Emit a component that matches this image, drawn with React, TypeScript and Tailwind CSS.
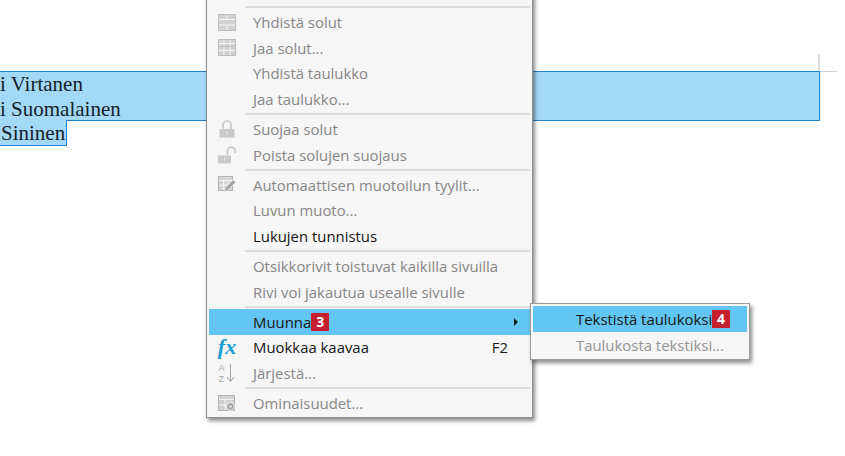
import type { ReactNode } from "react";

const ui = "font-['Open_Sans','Noto_Sans',sans-serif]";

function TableMerge() {
  return (
    <svg width="18" height="17" viewBox="0 0 18 17">
      <rect x="0.5" y="0.5" width="17" height="16" fill="#d2d2d2" stroke="#bdbdbd" />
      <path d="M1 5.5h16M1 11h16M9 1v4M9 11v5" stroke="#f5f5f5" strokeWidth="1" />
    </svg>
  );
}

function TableSplit() {
  return (
    <svg width="18" height="17" viewBox="0 0 18 17">
      <rect x="0.5" y="0.5" width="17" height="16" fill="#d2d2d2" stroke="#bdbdbd" />
      <path d="M1 4.5h16M1 11.5h16" stroke="#f5f5f5" />
      <path d="M6 1v15M12 1v15" stroke="#f5f5f5" />
      <path d="M3 7.5h12" stroke="#bdbdbd" />
    </svg>
  );
}

function LockClosed() {
  return (
    <svg width="16" height="18" viewBox="0 0 16 18" fill="none">
      <path d="M4 9V5a4 4 0 0 1 8 0v4" stroke="#c6c6c6" strokeWidth="1.6" />
      <rect x="0.5" y="9" width="15" height="8.5" fill="#c9c9c9" />
      <path d="M8 11v4" stroke="#e4e4e4" />
    </svg>
  );
}

function LockOpen() {
  return (
    <svg width="18" height="18" viewBox="0 0 18 18" fill="none">
      <path d="M9.5 9V5a3.8 3.8 0 0 1 7.6 0v2" stroke="#c6c6c6" strokeWidth="1.6" />
      <rect x="0" y="9.5" width="13" height="8" fill="#c9c9c9" />
      <path d="M6.5 11v4" stroke="#e4e4e4" />
    </svg>
  );
}

function AutoFormat() {
  return (
    <svg width="18" height="18" viewBox="0 0 18 18" fill="none">
      <rect x="0.5" y="0.5" width="14" height="14" fill="#d4d4d4" stroke="#b5b5b5" />
      <path d="M1 4.5h13M1 9h13M5.5 4v10M10 4v10" stroke="#f5f5f5" />
      <path d="M6 16l1.5-4.5 7.5-7.5 3 2-7.5 7.5z" fill="#a4a4a4" stroke="#f5f5f5" strokeWidth="0.6" />
    </svg>
  );
}

function SortAZ() {
  return (
    <svg width="18" height="22" viewBox="0 0 18 22" fill="none">
      <text x="0.5" y="9" fontSize="9" fill="#a6a6a6" fontFamily="Liberation Sans, sans-serif">A</text>
      <text x="0.5" y="19.5" fontSize="9" fill="#a6a6a6" fontFamily="Liberation Sans, sans-serif">Z</text>
      <path d="M12.5 2v17M8.8 15l3.7 4.5 3.7-4.5" stroke="#a9a9a9" strokeWidth="1.1" />
    </svg>
  );
}

function Props() {
  return (
    <svg width="18" height="17" viewBox="0 0 18 17" fill="none">
      <rect x="0.5" y="0.5" width="16" height="15" fill="#d0d0d0" stroke="#b5b5b5" />
      <path d="M1 4.5h15M1 10h8M7 5v10" stroke="#f5f5f5" />
      <circle cx="12.5" cy="11.5" r="4" fill="#a6a6a6" stroke="#f5f5f5" />
      <circle cx="12.5" cy="11.5" r="1.2" fill="#e6e6e6" />
    </svg>
  );
}

function Badge({ n }: { n: string }) {
  return (
    <span className="inline-flex h-[18px] w-[18px] items-center justify-center bg-[#c61f30] text-[14px] font-bold leading-none text-white">
      {n}
    </span>
  );
}

function Sep() {
  return <div className="my-[1.2px] ml-[36px] mr-[2px] h-[2px] bg-[#dcdcdc]" />;
}

function Row({
  icon,
  children,
  on,
  active,
  right,
}: {
  icon?: ReactNode;
  children: ReactNode;
  on?: boolean;
  active?: boolean;
  right?: ReactNode;
}) {
  return (
    <div
      className={`flex h-[25.65px] items-center ${active ? "bg-[#63c5f2]" : ""} ${
        on || active ? "text-[#161616]" : "text-[#878787]"
      }`}
    >
      <div className="mr-[8px] flex w-[36px] shrink-0 items-center justify-center">{icon}</div>
      <div className="flex flex-1 items-center whitespace-nowrap">{children}</div>
      {right}
    </div>
  );
}

export default function App() {
  return (
    <div className="relative h-[456px] w-[845px] overflow-hidden bg-white">
      {/* selected text in the document */}
      <div className="pt-[71px] font-['Liberation_Serif',serif] text-[21px] leading-[25px] text-[#141f2c]">
        <div className="h-[50px] w-[820px] border border-l-0 border-[#1f82cc] bg-[#a3d9f6]">
          <div className="whitespace-nowrap">i Virtanen</div>
          <div className="whitespace-nowrap">i Suomalainen</div>
        </div>
        <div className="-mt-[1px] h-[26px] w-[67px] border border-t-0 border-l-0 border-[#1f82cc] bg-[#a3d9f6] whitespace-nowrap pl-[1px] pt-[1px]">
          Sininen
        </div>
      </div>

      {/* page corner mark */}
      <div className="absolute left-[818px] top-[54px] h-[17px] w-[2px] bg-[#dcdcdc]" />
      <div className="absolute left-[820px] top-[71px] h-[1px] w-[17px] bg-[#cfcfcf]" />

      {/* context menu */}
      <div
        className={`${ui} absolute left-[206px] top-[-21px] w-[327px] border border-[#8d8d8d] bg-[#f6f6f6] pl-[2px] text-[14.9px] shadow-[2px_3px_4px_rgba(0,0,0,0.45)]`}
      >
        <div className="h-[25px]" />
        <Sep />
        <Row icon={<TableMerge />}>Yhdistä solut</Row>
        <Row icon={<TableSplit />}>Jaa solut...</Row>
        <Row>Yhdistä taulukko</Row>
        <Row>Jaa taulukko...</Row>
        <Sep />
        <Row icon={<LockClosed />}>Suojaa solut</Row>
        <Row icon={<LockOpen />}>Poista solujen suojaus</Row>
        <Sep />
        <Row icon={<AutoFormat />}>Automaattisen muotoilun tyylit...</Row>
        <Row>Luvun muoto...</Row>
        <Row on>Lukujen tunnistus</Row>
        <Sep />
        <Row>Otsikkorivit toistuvat kaikilla sivuilla</Row>
        <Row>Rivi voi jakautua usealle sivulle</Row>
        <Sep />
        <Row
          active
          right={
            <svg width="6" height="8" viewBox="0 0 6 8" className="mr-[13px]">
              <path d="M1 0l4 4-4 4z" fill="#1b1b1b" />
            </svg>
          }
        >
          Muunna <Badge n="3" />
        </Row>
        <Row
          on
          icon={
            <span className="font-['Liberation_Serif',serif] text-[22px] font-bold italic leading-none text-[#1a9fd8]">fx</span>
          }
          right={<span className="mr-[24px]">F2</span>}
        >
          Muokkaa kaavaa
        </Row>
        <Row icon={<SortAZ />}>Järjestä...</Row>
        <Sep />
        <Row icon={<Props />}>Ominaisuudet...</Row>
        <div className="h-[1px]" />
      </div>

      {/* submenu */}
      <div
        className={`${ui} absolute left-[530px] top-[303px] w-[220px] border border-[#9a9a9a] bg-[#f6f6f6] p-[2px] pb-[1px] text-[14.9px] shadow-[2px_3px_4px_rgba(0,0,0,0.45)]`}
      >
        <div className="flex h-[26px] items-center overflow-hidden bg-[#63c5f2] pl-[43px] text-[#161616] whitespace-nowrap">
          Tekstistä taulukoksi.
          <span className="-ml-[4px] inline-flex">
            <Badge n="4" />
          </span>
        </div>
        <div className="flex h-[26px] items-center pl-[43px] text-[#949494] whitespace-nowrap">Taulukosta tekstiksi...</div>
      </div>
    </div>
  );
}
